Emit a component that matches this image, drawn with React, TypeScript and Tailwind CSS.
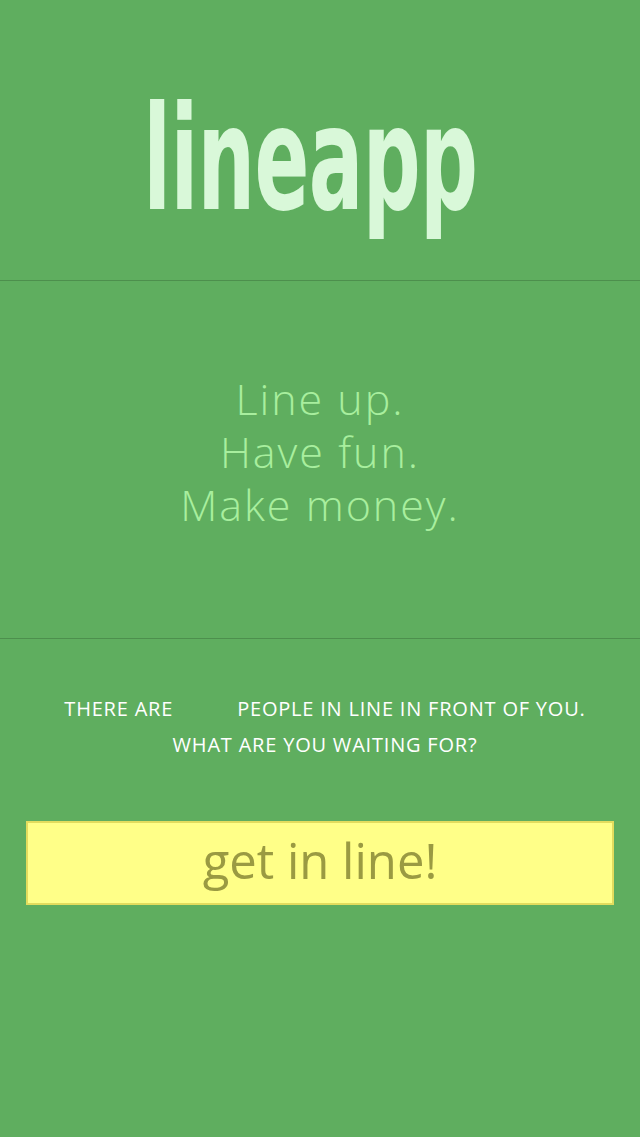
export default function App() {
  return (
    <div className="min-h-[1137px] w-full bg-[#5fae5f]" style={{ fontFamily: '"Open Sans", sans-serif' }}>
      <header className="h-[281px] flex items-center justify-center border-b border-[#4d8f4d]">
        <h1
          className="text-[#d9f8d9] font-bold text-[145px] leading-none tracking-[-1px] mt-[36px] mr-[20px] scale-x-[0.62]"
          style={{ fontFamily: '"Liberation Sans Narrow", "DejaVu Sans Condensed", sans-serif' }}
        >
          lineapp
        </h1>
      </header>

      <section className="h-[358px] flex flex-col items-center justify-center border-b border-[#4d8f4d] text-[#a8ee9e] text-[43px] leading-[53px] font-light tracking-[2px] pb-[16px]">
        <p>Line up.</p>
        <p>Have fun.</p>
        <p>Make money.</p>
      </section>

      <section className="px-[26px] pt-[52px]">
        <div className="text-white text-[20px] leading-[36px] uppercase tracking-[0.8px] text-center pl-[10px]">
          <p>
            There are <span className="inline-block w-[52px]"></span> people in line in front of you.
          </p>
          <p>What are you waiting for?</p>
        </div>

        <button className="mt-[58px] w-full h-[84px] bg-[#ffff88] border-2 border-[#e2dc5e] text-[#9a9a42] text-[49px] leading-none pb-[6px]">
          get in line!
        </button>
      </section>
    </div>
  );
}
